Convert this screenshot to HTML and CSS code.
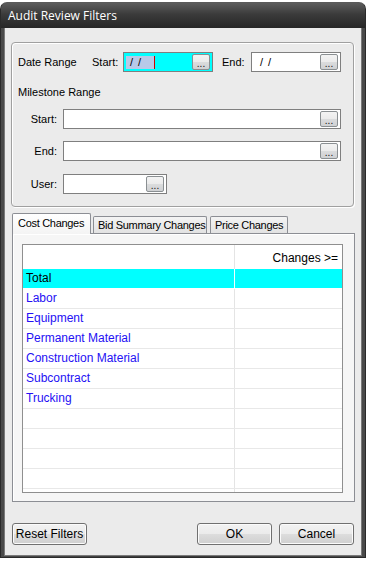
FILE: index.html
```html
<!DOCTYPE html>
<html>
<head>
<meta charset="utf-8">
<link rel="stylesheet" href="styles.css">
</head>
<body>
<div class="window">
  <div class="titlebar">Audit Review Filters</div>
  <div class="client">
    <div class="group">
      <div class="row r1">
        <span class="lbl date-lbl">Date Range</span>
        <span class="lbl start-lbl">Start:</span>
        <div class="field short active">
          <span class="sel">/ /</span><span class="caret"></span>
          <span class="dots">...</span>
        </div>
        <span class="lbl end-lbl">End:</span>
        <div class="field short">
          <span class="val">/ /</span>
          <span class="dots">...</span>
        </div>
      </div>
      <div class="row r2"><span class="lbl">Milestone Range</span></div>
      <div class="row r3">
        <span class="lbl rlbl">Start:</span>
        <div class="field wide"><span class="dots">...</span></div>
      </div>
      <div class="row r4">
        <span class="lbl rlbl">End:</span>
        <div class="field wide"><span class="dots">...</span></div>
      </div>
      <div class="row r5">
        <span class="lbl rlbl">User:</span>
        <div class="field user"><span class="dots">...</span></div>
      </div>
    </div>

    <div class="tabs">
      <div class="tab selected">Cost Changes</div>
      <div class="tab">Bid Summary Changes</div>
      <div class="tab">Price Changes</div>
    </div>
    <div class="panel">
      <div class="grid">
        <div class="grow head"><div class="c1"></div><div class="c2">Changes &gt;=</div></div>
        <div class="grow hl"><div class="c1">Total</div><div class="c2"></div></div>
        <div class="grow item"><div class="c1">Labor</div><div class="c2"></div></div>
        <div class="grow item"><div class="c1">Equipment</div><div class="c2"></div></div>
        <div class="grow item"><div class="c1">Permanent Material</div><div class="c2"></div></div>
        <div class="grow item"><div class="c1">Construction Material</div><div class="c2"></div></div>
        <div class="grow item"><div class="c1">Subcontract</div><div class="c2"></div></div>
        <div class="grow item"><div class="c1">Trucking</div><div class="c2"></div></div>
        <div class="grow"><div class="c1"></div><div class="c2"></div></div>
        <div class="grow"><div class="c1"></div><div class="c2"></div></div>
        <div class="grow"><div class="c1"></div><div class="c2"></div></div>
        <div class="grow"><div class="c1"></div><div class="c2"></div></div>
        <div class="grow"><div class="c1"></div><div class="c2"></div></div>
      </div>
    </div>

    <div class="buttons">
      <div class="btn">Reset Filters</div>
      <div class="spacer"></div>
      <div class="btn">OK</div>
      <div class="btn">Cancel</div>
    </div>
  </div>
</div>
</body>
</html>
```
FILE: styles.css
```css
* { box-sizing: border-box; }
html, body { margin: 0; padding: 0; background: #ffffff; }
body {
  width: 366px;
  height: 561px;
  overflow: hidden;
  font-family: "Liberation Sans", Arial, sans-serif;
  font-size: 11px;
  color: #000;
}
.window {
  margin-top: 2px;
  width: 366px;
  height: 556px;
  border-radius: 7px 7px 0 0;
  background: linear-gradient(to right, #4a4a4a, #3a3a3a 50%, #4a4a4a);
  padding: 0 3px 3px 3px;
  display: flex;
  flex-direction: column;
  border: 1px solid #2a2a2a;
  border-top-color: #5a5a5a;
}
.titlebar {
  height: 25px;
  flex: none;
  color: #ffffff;
  font-family: "Open Sans", "Liberation Sans", sans-serif;
  font-size: 12px;
  line-height: 26px;
  background: linear-gradient(to bottom, #5c5c5c, #3b3b3b 45%, #262626);
  margin: 0 -3px;
  padding-left: 7px;
  border-radius: 6px 6px 0 0;
}
.client {
  flex: 1;
  background: #ebebeb;
  padding: 14px 7px 10px 6px;
  display: flex;
  flex-direction: column;
  border: 1px solid #7a7a7a;
  border-top: none;
}
.group {
  height: 165px;
  border: 1px solid #a0a0a0;
  border-radius: 4px;
  box-shadow: inset 1px 1px 0 #ffffff, 1px 1px 0 #ffffff;
  padding: 9px 6px 0 6px;
  display: flex;
  flex-direction: column;
}
.row {
  display: flex;
  align-items: center;
  height: 20px;
  flex: none;
}
.r2 { margin-top: 10px; }
.r3 { margin-top: 7px; }
.r4 { margin-top: 12px; }
.r5 { margin-top: 13px; }
.lbl { white-space: nowrap; }
.date-lbl { width: 74px; }
.start-lbl { width: 31px; }
.end-lbl { width: 29px; margin-left: 9px; }
.rlbl { width: 39px; text-align: right; margin-right: 6px; }
.field {
  height: 20px;
  border: 1px solid #7f7f7f;
  background: #ffffff;
  display: flex;
  align-items: center;
  padding-left: 2px;
  position: relative;
}
.field.short { width: 90px; }
.field.wide { width: 278px; }
.field.user { width: 104px; }
.field.active { background: #00ffff; }
.sel {
  background: #b8c9e8;
  height: 13px;
  width: 28px;
  line-height: 13px;
  padding-left: 4px;
  letter-spacing: 1px;
}
.caret {
  width: 1px;
  height: 13px;
  background: #d00000;
}
.val { padding-left: 6px; letter-spacing: 1px; }
.dots {
  position: absolute;
  right: 2px;
  top: 1px;
  width: 18px;
  height: 16px;
  border: 1px solid #8a8f92;
  border-radius: 2px;
  background: linear-gradient(to bottom, #f3f3f3 0%, #ebebeb 50%, #dbdcdd 51%, #cfd1d3 100%);
  font-size: 10px;
  line-height: 17px;
  text-align: center;
  color: #111;
}
.tabs {
  margin-top: 7px;
  height: 19px;
  flex: none;
  display: flex;
  align-items: flex-end;
  padding-left: 1px;
  position: relative;
  z-index: 1;
}
.tab {
  height: 17px;
  border: 1px solid #8c8e94;
  border-bottom: none;
  border-radius: 2px 2px 0 0;
  background: linear-gradient(to bottom, #f4f4f4, #e2e2e2);
  font-size: 11px;
  letter-spacing: -0.3px;
  line-height: 16px;
  padding: 0 0 0 4px;
  margin-right: 3px;
  white-space: nowrap;
}
.tab.selected {
  height: 21px;
  margin-bottom: -1px;
  background: linear-gradient(to bottom, #ffffff, #f4f4f4);
  padding: 1px 0 0 5px;
  width: 79px;
  margin-right: 2px;
}
.tab:nth-child(2) { width: 114px; }
.tab:nth-child(3) { width: 78px; }
.panel {
  height: 269px;
  flex: none;
  margin-left: 1px;
  width: 343px;
  border: 1px solid #8c8e94;
  background: #f6f6f6;
  box-shadow: inset 1px 1px 0 #ffffff;
  padding: 10px 11px 8px 9px;
}
.grid {
  height: 249px;
  border: 1px solid #8f8f8f;
  background: #ffffff;
  overflow: hidden;
  font-size: 12px;
}
.grow {
  display: flex;
  height: 20px;
  border-bottom: 1px solid #e8e8e8;
}
.grow.head { height: 24px; border-bottom: none; }
.c1 {
  width: 212px;
  border-right: 1px solid #e4e4e4;
  padding-left: 3px;
  line-height: 19px;
  white-space: nowrap;
}
.c2 {
  flex: 1;
  text-align: right;
  padding-right: 4px;
  line-height: 19px;
}
.head .c2 { line-height: 26px; }
.hl { background: #00ffff; border-bottom-color: #ffffff; }
.hl .c1 { border-right-color: #f0ffff; }
.item .c1 { color: #2410f4; }
.buttons {
  margin-top: 21px;
  height: 22px;
  flex: none;
  display: flex;
  padding-left: 1px;
}
.spacer { flex: 1; }
.btn {
  width: 75px;
  height: 22px;
  border: 1px solid #707070;
  border-radius: 3px;
  background: linear-gradient(to bottom, #f2f2f2 0%, #ebebeb 50%, #dddddd 51%, #cfcfcf 100%);
  box-shadow: inset 0 0 0 1px #fbfbfb;
  font-size: 12px;
  line-height: 20px;
  text-align: center;
}
.btn + .btn { margin-left: 7px; }
```
